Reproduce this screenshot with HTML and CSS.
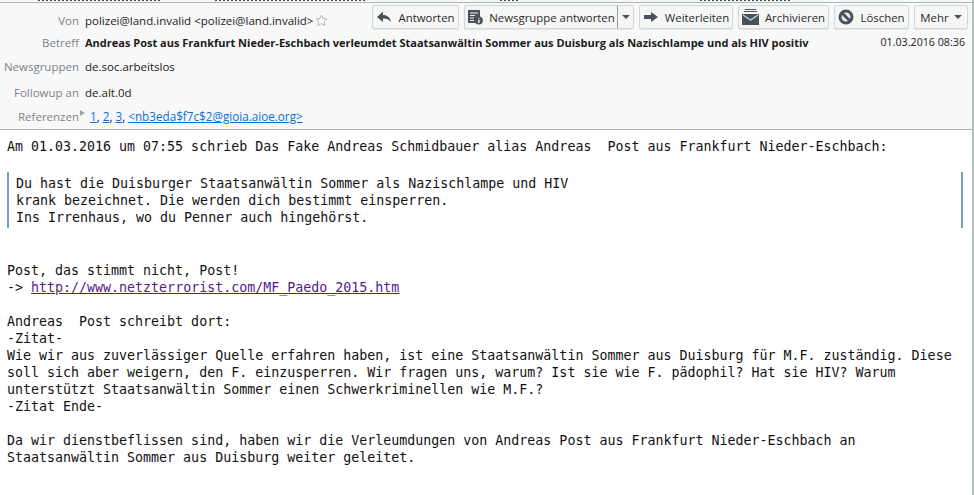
FILE: index.html
```html
<!DOCTYPE html>
<html lang="de">
<head>
    <meta charset="UTF-8">
    <title>Andreas Post aus Frankfurt</title>
    <link rel="stylesheet" href="styles.css">
</head>
<body>
    <div class="header">
        <div class="cut-text">
            <span class="cut-a"></span>
            <span class="cut-b"></span>
            <span class="cut-c"></span>
            <span class="cut-d"></span>
        </div>
        <div class="row row-from">
            <div class="label">Von</div>
            <div class="value">polizei@land.invalid &lt;polizei@land.invalid&gt;</div>
            <svg class="star" width="13" height="13" viewBox="0 0 13 13"><path d="M6.500 1l1.600 3.600 3.900.4-2.900 2.600.8 3.900-3.400-2-3.400 2 .8-3.900L1 5l3.900-.4z" fill="#fbfbfb" stroke="#b4b8bc"/></svg>
            <div class="toolbar">
                <button class="btn btn-reply">
                    <svg width="16" height="14" viewBox="0 0 16 14"><path d="M1 7l6-5.500v3.500c4 0 7 2 8 7-2-2.500-4-3.500-8-3.500v3.500z" fill="#4a5258"/></svg>
                    Antworten
                </button>
                <div class="btn-split">
                    <button class="btn btn-news">
                        <svg width="16" height="16" viewBox="0 0 16 16"><path d="M1 1h12v8H9v5H1z" fill="#4a5258"/><path d="M3 4h8M3 6.500h5M3 9h4M3 11.500h4" stroke="#f4f4f4"/><circle cx="11.800" cy="11.500" r="4" fill="#4a5258"/><path d="M11.800 9.500v.8M11.800 11v3" stroke="#fff" stroke-width="1.400"/></svg>
                        Newsgruppe antworten
                    </button>
                    <button class="btn btn-drop"><span class="arrow"></span></button>
                </div>
                <button class="btn btn-forward">
                    <svg width="16" height="12" viewBox="0 0 16 12"><path d="M1 4h7V1l7 5-7 5V8H1z" fill="#4a5258"/></svg>
                    Weiterleiten
                </button>
                <button class="btn btn-archive">
                    <svg width="17" height="16" viewBox="0 0 17 16"><path d="M3 .5h11M2 2.500h13" stroke="#4a5258"/><path d="M0 5h17v11H0z" fill="#4a5258"/><path d="M1 6l7.500 5L16 6" fill="none" stroke="#d5d8da" stroke-width="1.200"/></svg>
                    Archivieren
                </button>
                <button class="btn btn-delete">
                    <svg width="16" height="16" viewBox="0 0 16 16"><circle cx="8" cy="8" r="6" fill="#e8eaeb" stroke="#4a5258" stroke-width="3"/><path d="M4 4l8 8" stroke="#4a5258" stroke-width="3"/></svg>
                    Löschen
                </button>
                <button class="btn btn-more">Mehr <span class="arrow"></span></button>
            </div>
        </div>
        <div class="row row-subject">
            <div class="label">Betreff</div>
            <div class="value subject">Andreas Post aus Frankfurt Nieder-Eschbach verleumdet Staatsanwältin Sommer aus Duisburg als Nazischlampe und als HIV positiv</div>
            <div class="date">01.03.2016 08:36</div>
        </div>
        <div class="row row-groups">
            <div class="label">Newsgruppen</div>
            <div class="value">de.soc.arbeitslos</div>
        </div>
        <div class="row row-followup">
            <div class="label">Followup an</div>
            <div class="value">de.alt.0d</div>
        </div>
        <div class="row row-refs">
            <div class="label">Referenzen</div>
            <span class="twisty"></span>
            <div class="value refs"><a href="#">1</a>, <a href="#">2</a>, <a href="#">3</a>, <a href="#">&lt;nb3eda$f7c$2@gioia.aioe.org&gt;</a></div>
        </div>
    </div>

    <div class="message">
        <pre class="intro">Am 01.03.2016 um 07:55 schrieb Das Fake Andreas Schmidbauer alias Andreas  Post aus Frankfurt Nieder-Eschbach:</pre>
        <blockquote class="quote"><pre>Du hast die Duisburger Staatsanwältin Sommer als Nazischlampe und HIV
krank bezeichnet. Die werden dich bestimmt einsperren.
Ins Irrenhaus, wo du Penner auch hingehörst.</pre></blockquote>
        <pre class="text">Post, das stimmt nicht, Post!
-&gt; <a class="visited" href="#">http://www.netzterrorist.com/MF_Paedo_2015.htm</a>

Andreas  Post schreibt dort:
-Zitat-
Wie wir aus zuverlässiger Quelle erfahren haben, ist eine Staatsanwältin Sommer aus Duisburg für M.F. zuständig. Diese
soll sich aber weigern, den F. einzusperren. Wir fragen uns, warum? Ist sie wie F. pädophil? Hat sie HIV? Warum
unterstützt Staatsanwältin Sommer einen Schwerkriminellen wie M.F.?
-Zitat Ende-

Da wir dienstbeflissen sind, haben wir die Verleumdungen von Andreas Post aus Frankfurt Nieder-Eschbach an
Staatsanwältin Sommer aus Duisburg weiter geleitet.</pre>
    </div>
</body>
</html>
```

FILE: styles.css
```css
html, body {
    margin: 0;
    padding: 0;
    background-color: white;
}

body {
    width: 974px;
    height: 495px;
    box-sizing: border-box;
    overflow: hidden;
    border-right: 2px solid #b2bfb9;
    font-family: "Open Sans", "Noto Sans", sans-serif;
    font-size: 11.5px;
    color: #1a1a1a;
}

.header {
    box-sizing: border-box;
    height: 130px;
    overflow: hidden;
    background-color: #f8f8f8;
    border-bottom: 1px solid #aab6c0;
}

/* leftover of the window above, only the bottom of its letters shows */
.cut-text {
    display: flex;
    height: 2px;
    border-bottom: 1px solid #aab6c0;
    overflow: hidden;
}

.cut-text span {
    display: block;
    height: 1px;
    background: repeating-linear-gradient(90deg, #444 0 2px, transparent 2px 4px);
}

.cut-a {
    margin-left: 38px;
    width: 122px;
}

.cut-b {
    margin-left: 55px;
    width: 150px;
}

.cut-c {
    margin-left: 135px;
    width: 20px;
}

.cut-d {
    margin-left: 180px;
    width: 90px;
}

.row {
    display: flex;
    align-items: center;
}

.label {
    width: 79px;
    flex-shrink: 0;
    padding-right: 6px;
    text-align: right;
    color: #7d8388;
}

.row-from {
    height: 24px;
    margin-top: 2px;
}

.row-from .label,
.row-from .value,
.star {
    margin-top: 6px;
}

.row-subject {
    height: 20px;
    margin-top: 3px;
}

.row-groups {
    height: 20px;
    margin-top: 4px;
}

.row-followup {
    height: 20px;
    margin-top: 6px;
}

.row-refs {
    height: 20px;
    margin-top: 4px;
}

.star {
    margin-left: 2px;
}

.subject {
    flex: 1;
    font-size: 11px;
    font-weight: bold;
    white-space: nowrap;
}

.date {
    margin-right: 7px;
    font-size: 10.7px;
    white-space: nowrap;
}

.toolbar {
    display: flex;
    gap: 5px;
    margin-left: auto;
    margin-right: 4px;
}

.btn {
    display: flex;
    align-items: center;
    justify-content: center;
    gap: 6px;
    height: 24px;
    padding: 0;
    border: 1px solid #d4d6d8;
    border-radius: 2px;
    background-color: #f5f6f6;
    box-shadow: 0 1px 1px rgba(0, 0, 0, 0.08);
    font-family: inherit;
    font-size: 11.4px;
    color: #2a2a2a;
    box-sizing: border-box;
}

.btn-split {
    display: flex;
}

.btn-reply { width: 87px; }
.btn-news { width: 154px; border-right-color: #9aa0a4; border-radius: 2px 0 0 2px; }
.btn-drop { width: 16px; border-left: 0; border-radius: 0 2px 2px 0; }
.btn-forward { width: 94px; }
.btn-archive { width: 91px; }
.btn-delete { width: 75px; }
.btn-more { width: 54px; gap: 5px; }

.arrow {
    width: 0;
    height: 0;
    border-left: 4px solid transparent;
    border-right: 4px solid transparent;
    border-top: 4px solid #4a5258;
}

.twisty {
    width: 0;
    height: 0;
    margin: -6px 0 0 -5px;
    border-top: 3px solid transparent;
    border-bottom: 3px solid transparent;
    border-left: 5px solid #a0a4a8;
}

.refs {
    margin-left: 5px;
    font-size: 11.7px;
}

.refs a {
    color: #0a6fd8;
}

.message {
    padding: 8px 0 0 7px;
}

pre {
    margin: 0;
    font-family: "DejaVu Sans Mono", "Liberation Mono", monospace;
    font-size: 13.3px;
    line-height: 17px;
    color: #111;
}

.quote {
    width: 956px;
    height: 56px;
    box-sizing: border-box;
    margin: 17px 0 0 0;
    padding: 3px 7px 0;
    border-left: 2px solid #729fcf;
    border-right: 2px solid #729fcf;
}

.text {
    margin-top: 34px;
}

.visited {
    color: #551a8b;
}
```
